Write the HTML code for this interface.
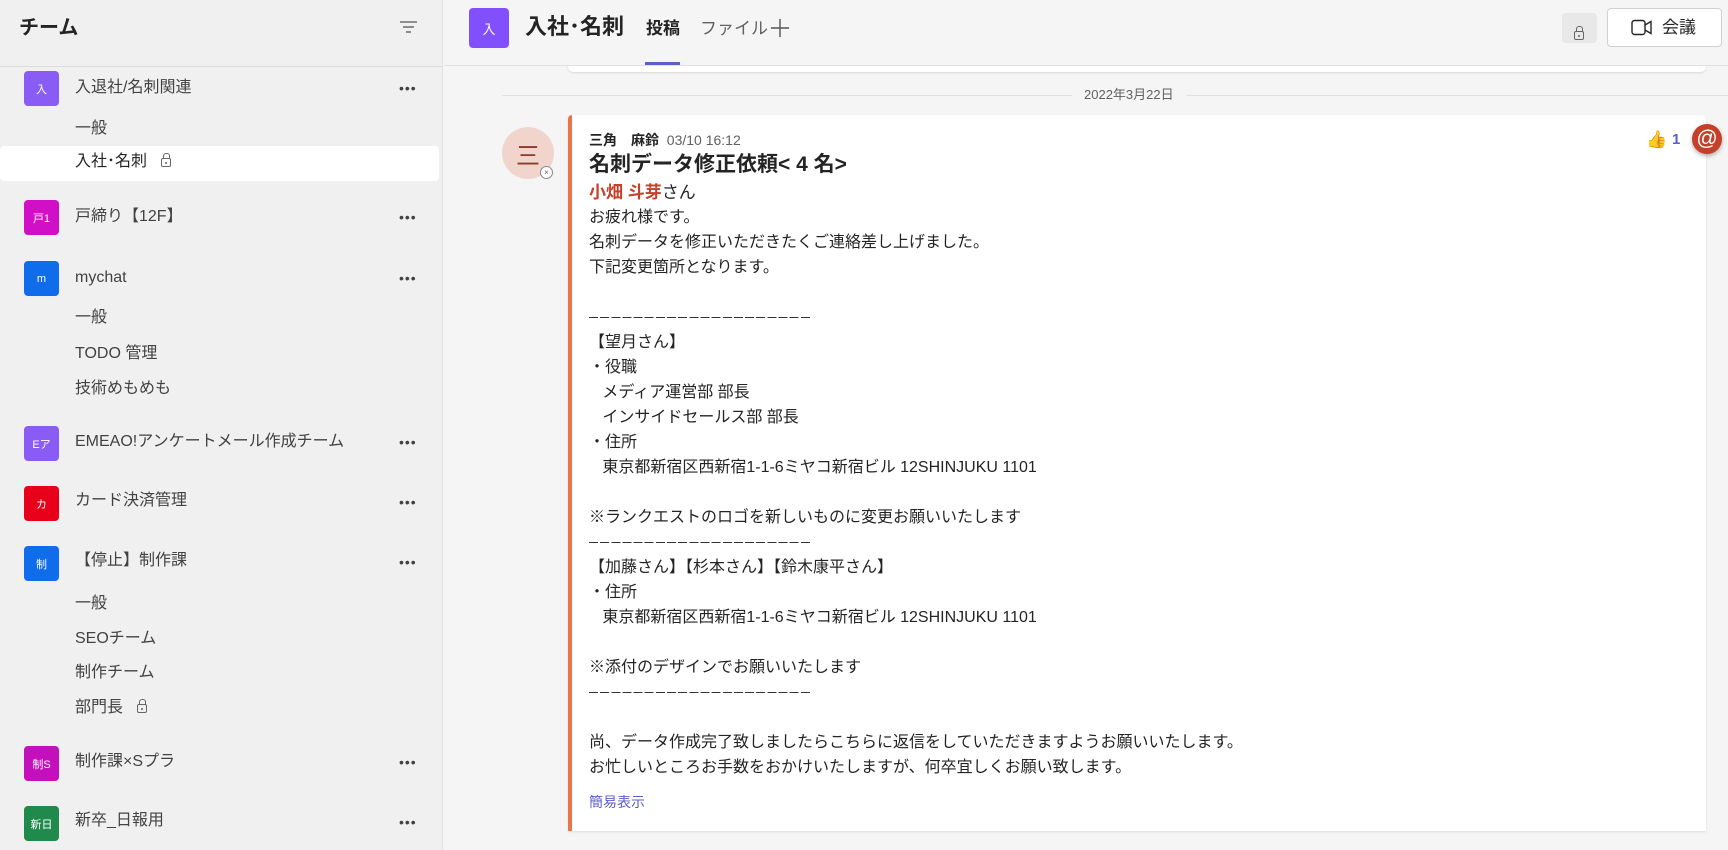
<!DOCTYPE html>
<html><head><meta charset="utf-8">
<style>
*{margin:0;padding:0;box-sizing:border-box}
body{width:1728px;height:850px;overflow:hidden;background:#f5f5f5;font-family:"Liberation Sans","Noto Sans CJK JP",sans-serif;color:#242424;position:relative}
.abs{position:absolute}
#side{left:0;top:0;width:443px;height:850px;background:#f0f0f0;border-right:1px solid #e3e3e3}
.t{position:absolute;left:75px;font-size:16px;color:#424242;line-height:20px;white-space:nowrap}
.av{position:absolute;left:24px;width:35px;height:35px;border-radius:4px;color:#fff;font-size:11px;display:flex;align-items:center;justify-content:center}
.dots{position:absolute;left:399px;font-size:14px;color:#424242;letter-spacing:1px;line-height:10px}
.lk{display:inline-block;width:10px;height:9px;border:1.3px solid #666;border-radius:2px;position:relative;margin-left:14px;vertical-align:-1px}
.lk:before{content:"";position:absolute;left:1px;top:-6px;width:5px;height:5px;border:1.3px solid #666;border-bottom:none;border-radius:3px 3px 0 0}
.lk:after{content:"";position:absolute;left:3px;top:2.5px;width:2px;height:2px;background:#666;border-radius:1px}
.m{position:absolute;left:589px;font-size:16px;line-height:25px;color:#242424;white-space:nowrap;font-family:"Liberation Sans","Noto Sans CJK JP",sans-serif}
.dash{display:inline-block;width:223px;height:1.3px;background:repeating-linear-gradient(90deg,#333 0 9px,transparent 9px 11.15px);vertical-align:middle}
</style></head><body>
<div id="side" class="abs">
 <div class="abs" style="left:19px;top:15px;font-size:20px;font-weight:bold;line-height:26px">チーム</div>
 <svg class="abs" style="left:399px;top:19px" width="19" height="16"><g stroke="#555" stroke-width="1.3"><line x1="1" y1="3" x2="18" y2="3"/><line x1="4" y1="8" x2="15" y2="8"/><line x1="7" y1="13" x2="12" y2="13"/></g></svg>
 <div class="abs" style="left:0;top:66px;width:443px;height:1px;background:#dcdcdc"></div>

 <div class="av" style="top:71px;background:#8a5cf6">入</div><div class="t" style="top:78px">入退社/名刺関連</div><div class="dots" style="top:83px">•••</div>
 <div class="t" style="top:119px">一般</div>
 <div class="abs" style="left:0;top:146px;width:439px;height:35px;background:#fff;border-radius:4px"></div>
 <div class="t" style="top:152px;color:#242424">入社･名刺<span class="lk"></span></div>
 <div class="av" style="top:200px;background:#d10fc6">戸1</div><div class="t" style="top:207px">戸締り【12F】</div><div class="dots" style="top:212px">•••</div>
 <div class="av" style="top:261px;background:#0f6cea">m</div><div class="t" style="top:268px">mychat</div><div class="dots" style="top:273px">•••</div>
 <div class="t" style="top:308px">一般</div>
 <div class="t" style="top:344px">TODO 管理</div>
 <div class="t" style="top:379px">技術めもめも</div>
 <div class="av" style="top:426px;background:#8a5cf6">Eア</div><div class="t" style="top:432px">EMEAO!アンケートメール作成チーム</div><div class="dots" style="top:437px">•••</div>
 <div class="av" style="top:486px;background:#e8001a">カ</div><div class="t" style="top:491px">カード決済管理</div><div class="dots" style="top:497px">•••</div>
 <div class="av" style="top:546px;background:#0f6cea">制</div><div class="t" style="top:551px">【停止】制作課</div><div class="dots" style="top:557px">•••</div>
 <div class="t" style="top:594px">一般</div>
 <div class="t" style="top:629px">SEOチーム</div>
 <div class="t" style="top:663px">制作チーム</div>
 <div class="t" style="top:698px">部門長<span class="lk"></span></div>
 <div class="av" style="top:746px;background:#c40fbd">制S</div><div class="t" style="top:752px">制作課×Sプラ</div><div class="dots" style="top:757px">•••</div>
 <div class="av" style="top:806px;background:#208a4c">新日</div><div class="t" style="top:811px">新卒_日報用</div><div class="dots" style="top:817px">•••</div>
</div>

<!-- previous card -->
<div class="abs" style="left:568px;top:40px;width:1138px;height:32px;background:#fff;border-radius:0 0 5px 5px;box-shadow:0 1px 2px rgba(0,0,0,.12)"></div>
<!-- header -->
<div class="abs" style="left:444px;top:0;width:1284px;height:65px;background:#f5f5f5"></div>
<div class="abs" style="left:444px;top:65px;width:1284px;height:1px;background:#e0e0e0"></div>
<div class="abs" style="left:469px;top:8px;width:40px;height:40px;border-radius:4px;background:#8150fc;color:#fff;font-size:13px;display:flex;align-items:center;justify-content:center">入</div>
<div class="abs" style="left:525px;top:12px;font-size:22px;font-weight:bold;line-height:30px;white-space:nowrap">入社･名刺</div>
<div class="abs" style="left:646px;top:17px;font-size:17px;font-weight:bold;line-height:24px">投稿</div>
<div class="abs" style="left:645px;top:62px;width:35px;height:3px;background:#5b5fc7"></div>
<div class="abs" style="left:700px;top:17px;font-size:17px;color:#616161;line-height:24px">ファイル</div>
<svg class="abs" style="left:770px;top:18px" width="20" height="20"><g stroke="#555" stroke-width="1.4"><line x1="10" y1="1" x2="10" y2="19"/><line x1="1" y1="10" x2="19" y2="10"/></g></svg>
<div class="abs" style="left:1562px;top:13px;width:35px;height:30px;background:#e8e8e8;border-radius:4px"></div>
<div class="lk abs" style="left:1574px;top:26px;margin:0"></div>
<div class="abs" style="left:1607px;top:8px;width:115px;height:39px;background:#fff;border:1px solid #d1d1d1;border-radius:4px"></div>
<svg class="abs" style="left:1631px;top:19px" width="22" height="17"><rect x="1" y="1.5" width="13" height="14" rx="2.5" fill="none" stroke="#242424" stroke-width="1.4"/><path d="M14 6 L20 2.5 V14.5 L14 11" fill="none" stroke="#242424" stroke-width="1.4"/></svg>
<div class="abs" style="left:1662px;top:16px;font-size:17px;line-height:24px">会議</div>

<div class="abs" style="left:502px;top:95px;width:1226px;height:1px;background:#e0e0e0"></div>
<div class="abs" style="left:1072px;top:86px;padding:0 12px;background:#f5f5f5;font-size:13px;color:#616161;line-height:18px">2022年3月22日</div>

<!-- message -->
<div class="abs" style="left:502px;top:127px;width:52px;height:52px;border-radius:50%;background:#f1d4cb;color:#8a3b2a;font-size:24px;display:flex;align-items:center;justify-content:center">三</div>
<div class="abs" style="left:540px;top:166px;width:13px;height:13px;border-radius:50%;background:#fff;border:1px solid #888;font-size:8px;color:#666;line-height:11px;text-align:center">×</div>
<div class="abs" style="left:568px;top:115px;width:1138px;height:716px;background:#fff;border-left:4px solid #e97548;border-radius:4px 4px 0 0;box-shadow:0 1px 2px rgba(0,0,0,.1)"></div>
<div class="m" style="top:130px;font-size:14px;line-height:20px"><b style="font-weight:600">三角　麻鈴</b>&nbsp; <span style="color:#616161">03/10 16:12</span></div>
<div class="m" style="top:151px;font-size:21px;font-weight:bold;line-height:28px">名刺データ修正依頼&lt; 4 名&gt;</div>
<div class="m" style="top:180px;font-size:17px;line-height:25px"><span style="color:#c4402a;font-weight:bold">小畑 斗芽</span>さん</div>
<div class="m" style="top:205px">お疲れ様です。<br>名刺データを修正いただきたくご連絡差し上げました。<br>下記変更箇所となります。<br>&nbsp;<br><span class="dash"></span><br>【望月さん】<br>・役職<br>&nbsp;&nbsp;&nbsp;メディア運営部 部長<br>&nbsp;&nbsp;&nbsp;インサイドセールス部 部長<br>・住所<br>&nbsp;&nbsp;&nbsp;東京都新宿区西新宿1-1-6ミヤコ新宿ビル 12SHINJUKU 1101<br>&nbsp;<br>※ランクエストのロゴを新しいものに変更お願いいたします<br><span class="dash"></span><br>【加藤さん】【杉本さん】【鈴木康平さん】<br>・住所<br>&nbsp;&nbsp;&nbsp;東京都新宿区西新宿1-1-6ミヤコ新宿ビル 12SHINJUKU 1101<br>&nbsp;<br>※添付のデザインでお願いいたします<br><span class="dash"></span><br>&nbsp;<br>尚、データ作成完了致しましたらこちらに返信をしていただきますようお願いいたします。<br>お忙しいところお手数をおかけいたしますが、何卒宜しくお願い致します。</div>
<div class="m" style="top:792px;font-size:14px;line-height:20px;color:#5b5fc7">簡易表示</div>

<div class="abs" style="left:1646px;top:129px;font-size:17px;line-height:22px">👍</div>
<div class="abs" style="left:1672px;top:130px;font-size:15px;font-weight:bold;color:#5b5fc7;line-height:20px">1</div>
<div class="abs" style="left:1692px;top:124px;width:30px;height:30px;border-radius:50%;background:#c4402a;color:#fff;font-size:21px;line-height:29px;text-align:center;box-shadow:0 2px 4px rgba(0,0,0,.3)">@</div>
</body></html>
